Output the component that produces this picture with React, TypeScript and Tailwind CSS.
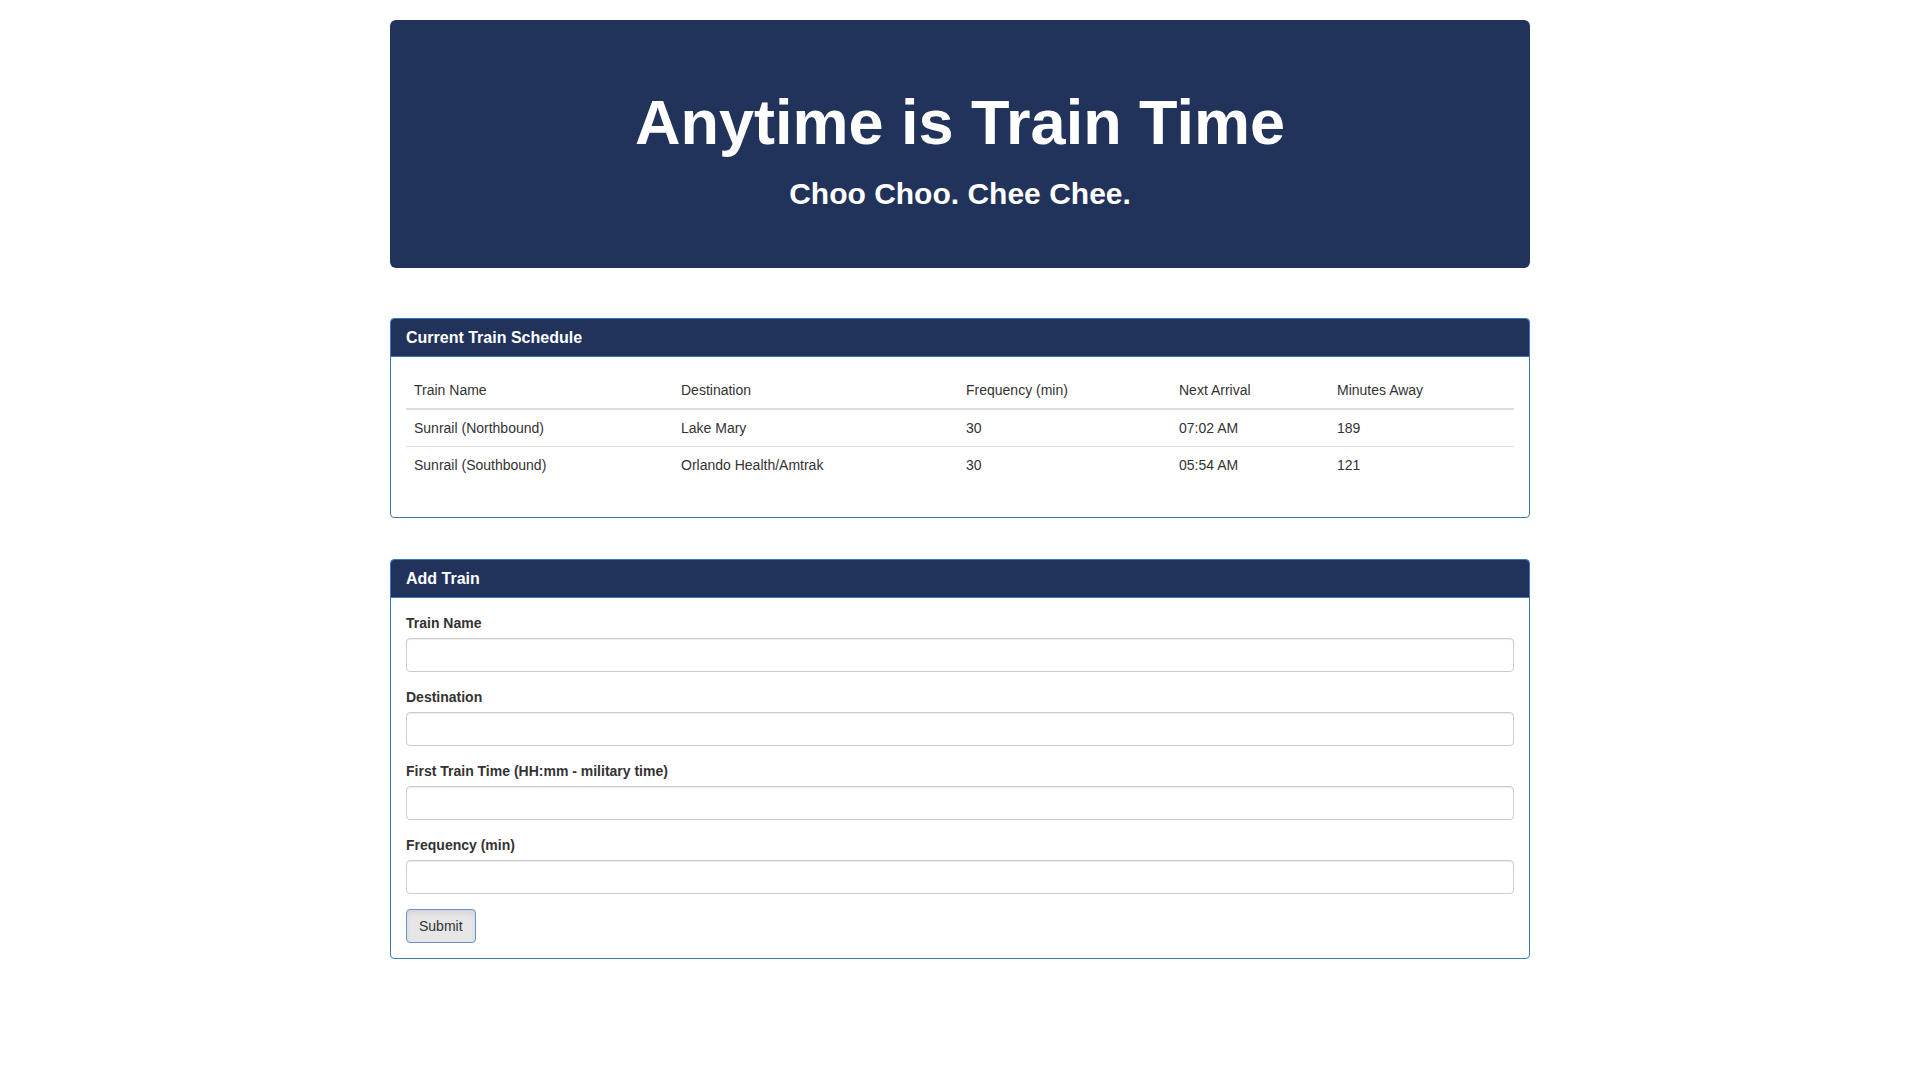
import React from "react";

const rows = [
  ["Sunrail (Northbound)", "Lake Mary", "30", "07:02 AM", "189"],
  ["Sunrail (Southbound)", "Orlando Health/Amtrak", "30", "05:54 AM", "121"],
];

const fields = [
  "Train Name",
  "Destination",
  "First Train Time (HH:mm - military time)",
  "Frequency (min)",
];

export default function App() {
  return (
    <div
      className="min-h-[1080px] bg-white text-[14px] leading-[20px] text-[#333333]"
      style={{ fontFamily: '"Liberation Sans", Arial, Helvetica, sans-serif' }}
    >
      <div className="mx-auto w-[1170px] px-[15px] pt-[20px]">
        {/* Jumbotron */}
        <div className="rounded-[6px] bg-[#21325b] px-[60px] pt-[48px] pb-[48px] text-center text-white">
          <h1 className="mt-[20px] mb-0 text-[63px] font-bold leading-[1.1]">Anytime is Train Time</h1>
          <h2 className="mt-[20px] mb-[10px] text-[30px] font-bold leading-[1.1]">Choo Choo. Chee Chee.</h2>
        </div>

        {/* Schedule panel */}
        <div className="mt-[50px] overflow-hidden rounded-[4px] border border-[#337ab7] bg-white">
          <div className="border-b border-[#337ab7] bg-[#21325b] px-[15px] py-[10px]">
            <h3 className="m-0 text-[16px] font-bold leading-[17px] text-white">Current Train Schedule</h3>
          </div>
          <div className="p-[15px]">
            <table className="mb-[19px] w-full border-collapse text-left">
              <thead>
                <tr>
                  <th className="w-[267px] border-b-2 border-[#dddddd] p-[8px] font-normal">Train Name</th>
                  <th className="w-[285px] border-b-2 border-[#dddddd] p-[8px] font-normal">Destination</th>
                  <th className="w-[213px] border-b-2 border-[#dddddd] p-[8px] font-normal">Frequency (min)</th>
                  <th className="w-[158px] border-b-2 border-[#dddddd] p-[8px] font-normal">Next Arrival</th>
                  <th className="border-b-2 border-[#dddddd] p-[8px] font-normal">Minutes Away</th>
                </tr>
              </thead>
              <tbody>
                {rows.map((r, i) => (
                  <tr key={i}>
                    {r.map((c, j) => (
                      <td key={j} className={`p-[8px] ${i > 0 ? "border-t border-[#dddddd]" : ""}`}>
                        {c}
                      </td>
                    ))}
                  </tr>
                ))}
              </tbody>
            </table>
          </div>
        </div>

        {/* Add train panel */}
        <div className="mt-[41px] overflow-hidden rounded-[4px] border border-[#337ab7] bg-white">
          <div className="border-b border-[#337ab7] bg-[#21325b] px-[15px] py-[10px]">
            <h3 className="m-0 text-[16px] font-bold leading-[17px] text-white">Add Train</h3>
          </div>
          <div className="p-[15px]">
            {fields.map((f) => (
              <div key={f} className="mb-[15px]">
                <label className="mb-[5px] block font-bold">{f}</label>
                <input
                  type="text"
                  className="block h-[34px] w-full rounded-[4px] border border-[#cccccc] bg-white px-[12px] py-[6px] shadow-[inset_0_1px_1px_rgba(0,0,0,0.075)] outline-none"
                />
              </div>
            ))}
            <button
              type="button"
              className="h-[34px] rounded-[4px] border border-[#6d93cf] bg-[#e6e6e6] px-[12px] py-[6px] text-[14px] text-[#333333] shadow-[inset_0_3px_5px_rgba(0,0,0,0.08)]"
            >
              Submit
            </button>
          </div>
        </div>
      </div>
    </div>
  );
}
